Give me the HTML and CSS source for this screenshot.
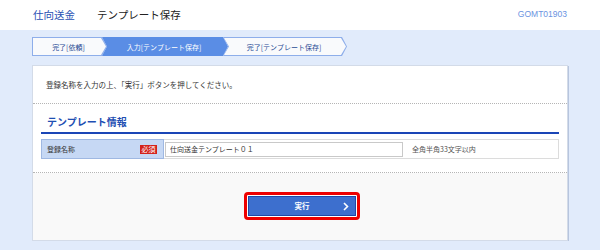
FILE: index.html
```html
<!DOCTYPE html>
<html lang="ja">
<head>
    <meta charset="UTF-8">
    <title>テンプレート保存</title>
    <link rel="stylesheet" href="styles.css">
</head>
<body>
    <div class="header">
        <div class="header-title">
            <span class="menu-name">仕向送金</span>
            <span class="page-name">テンプレート保存</span>
        </div>
        <span class="screen-id">GOMT01903</span>
    </div>

    <div class="main">
        <div class="steps">
            <div class="step step-first"><div class="step-inner">完了[依頼]</div></div>
            <div class="step step-active"><div class="step-inner">入力[テンプレート保存]</div></div>
            <div class="step"><div class="step-inner">完了[テンプレート保存]</div></div>
        </div>

        <div class="panel">
            <div class="panel-message">登録名称を入力の上、「実行」ボタンを押してください。</div>

            <div class="panel-body">
                <h2 class="section-title">テンプレート情報</h2>
                <div class="form-row">
                    <div class="form-label">
                        <span>登録名称</span>
                        <span class="required">必須</span>
                    </div>
                    <div class="form-field">
                        <input type="text" class="text-input" value="仕向送金テンプレート０１">
                        <span class="hint">全角半角33文字以内</span>
                    </div>
                </div>
            </div>

            <div class="panel-footer">
                <span class="highlight">
                    <button class="btn-run">
                        <span>実行</span>
                        <svg class="chevron" width="6" height="9" viewBox="0 0 6 9">
                            <polyline points="1,1 4.5,4.5 1,8" fill="none" stroke="#fff" stroke-width="1.6"/>
                        </svg>
                    </button>
                </span>
            </div>
        </div>
    </div>
</body>
</html>
```

FILE: styles.css
```css
body {
    margin: 0;
    background-color: #e1ebfb;
    font-family: "Noto Sans CJK JP", "Noto Sans", sans-serif;
    color: #333;
}

.header {
    height: 30px;
    background-color: #fff;
    display: flex;
    align-items: center;
    justify-content: space-between;
    padding: 0 33px 2px 33px;
    box-sizing: border-box;
}

.header-title {
    display: flex;
    align-items: center;
    gap: 22px;
}

.menu-name {
    font-size: 10.5px;
    color: #1f4fb3;
}

.page-name {
    font-size: 10.5px;
    color: #222;
}

.screen-id {
    font-family: "Liberation Sans", sans-serif;
    font-size: 8.5px;
    color: #6a93df;
}

.main {
    padding: 7px 32px 0 32px;
}

/* step indicator */
.steps {
    display: flex;
    height: 19px;
}

.step {
    width: 124px;
    margin-left: -5px;
    background-color: #8eaeea;
    clip-path: polygon(0 0, calc(100% - 5px) 0, 100% 50%, calc(100% - 5px) 100%, 0 100%, 5px 50%);
    padding: 1px;
    box-sizing: border-box;
}

.step-first {
    width: 75px;
    margin-left: 0;
    clip-path: polygon(0 0, calc(100% - 5px) 0, 100% 50%, calc(100% - 5px) 100%, 0 100%);
}

.step-inner {
    height: 100%;
    background-color: #f9fafc;
    clip-path: polygon(0 0, calc(100% - 5px) 0, 100% 50%, calc(100% - 5px) 100%, 0 100%, 5px 50%);
    display: flex;
    align-items: center;
    justify-content: center;
    font-size: 7px;
    color: #2a4c95;
    padding-right: 2px;
}

.step-first .step-inner {
    clip-path: polygon(0 0, calc(100% - 5px) 0, 100% 50%, calc(100% - 5px) 100%, 0 100%);
}

.step-active {
    width: 126px;
    background-color: #5a8de5;
}

.step-active .step-inner {
    background-color: #5a8de5;
    color: #fff;
}

/* panel */
.panel {
    margin-top: 9px;
    background-color: #fff;
    border: 1px solid #d3dbe8;
    box-shadow: 1px 1px 0 #b7c5de;
}

.panel-message {
    height: 37px;
    display: flex;
    align-items: center;
    padding: 0 13px;
    font-size: 7.5px;
    color: #333;
    border-bottom: 1px dotted #b5b5b5;
}

.panel-body {
    padding: 10px 8px 13px 8px;
    border-bottom: 1px dotted #b5b5b5;
}

.section-title {
    margin: 0;
    padding: 0 6px 3px 6px;
    font-size: 10px;
    font-weight: bold;
    color: #1f4fb3;
    border-bottom: 2px solid #1a45b6;
}

.form-row {
    margin-top: 5px;
    display: flex;
    height: 20px;
    border: 1px solid #dcdcdc;
    box-sizing: border-box;
}

.form-label {
    width: 123px;
    margin: -1px 0 -1px -1px;
    background-color: #c6d8f4;
    border: 1px solid #9fb8e2;
    box-sizing: border-box;
    display: flex;
    align-items: center;
    justify-content: space-between;
    padding: 0 6px 0 5px;
    font-size: 7px;
    color: #333;
}

.required {
    background-color: #d3221b;
    color: #fff;
    font-size: 7px;
    padding: 0 1.5px;
    line-height: 9px;
    height: 9px;
    white-space: nowrap;
}

.form-field {
    display: flex;
    align-items: center;
    padding-left: 1px;
}

.text-input {
    width: 238px;
    height: 15px;
    border: 1px solid #c9c9c9;
    box-sizing: border-box;
    padding: 0 4px;
    font-family: "Noto Sans CJK JP", sans-serif;
    font-size: 7px;
    color: #333;
}

.hint {
    margin-left: 9px;
    font-size: 7px;
    color: #555;
}

.panel-footer {
    height: 67px;
    background-color: #f9f9f9;
    display: flex;
    align-items: center;
    justify-content: center;
    padding-bottom: 2px;
    box-sizing: border-box;
}

.highlight {
    display: inline-block;
    border: 3px solid #ee0000;
    border-radius: 4px;
    padding: 1px;
    background-color: #fff;
    margin-left: 4px;
}

.btn-run {
    display: block;
    position: relative;
    width: 108px;
    height: 20px;
    background-color: #3d6fce;
    border: 1px solid #1f4aa8;
    color: #fff;
    font-family: "Noto Sans CJK JP", sans-serif;
    font-size: 7.5px;
    font-weight: bold;
    padding: 0;
    cursor: pointer;
}

.chevron {
    position: absolute;
    right: 6px;
    top: 5px;
}
```
